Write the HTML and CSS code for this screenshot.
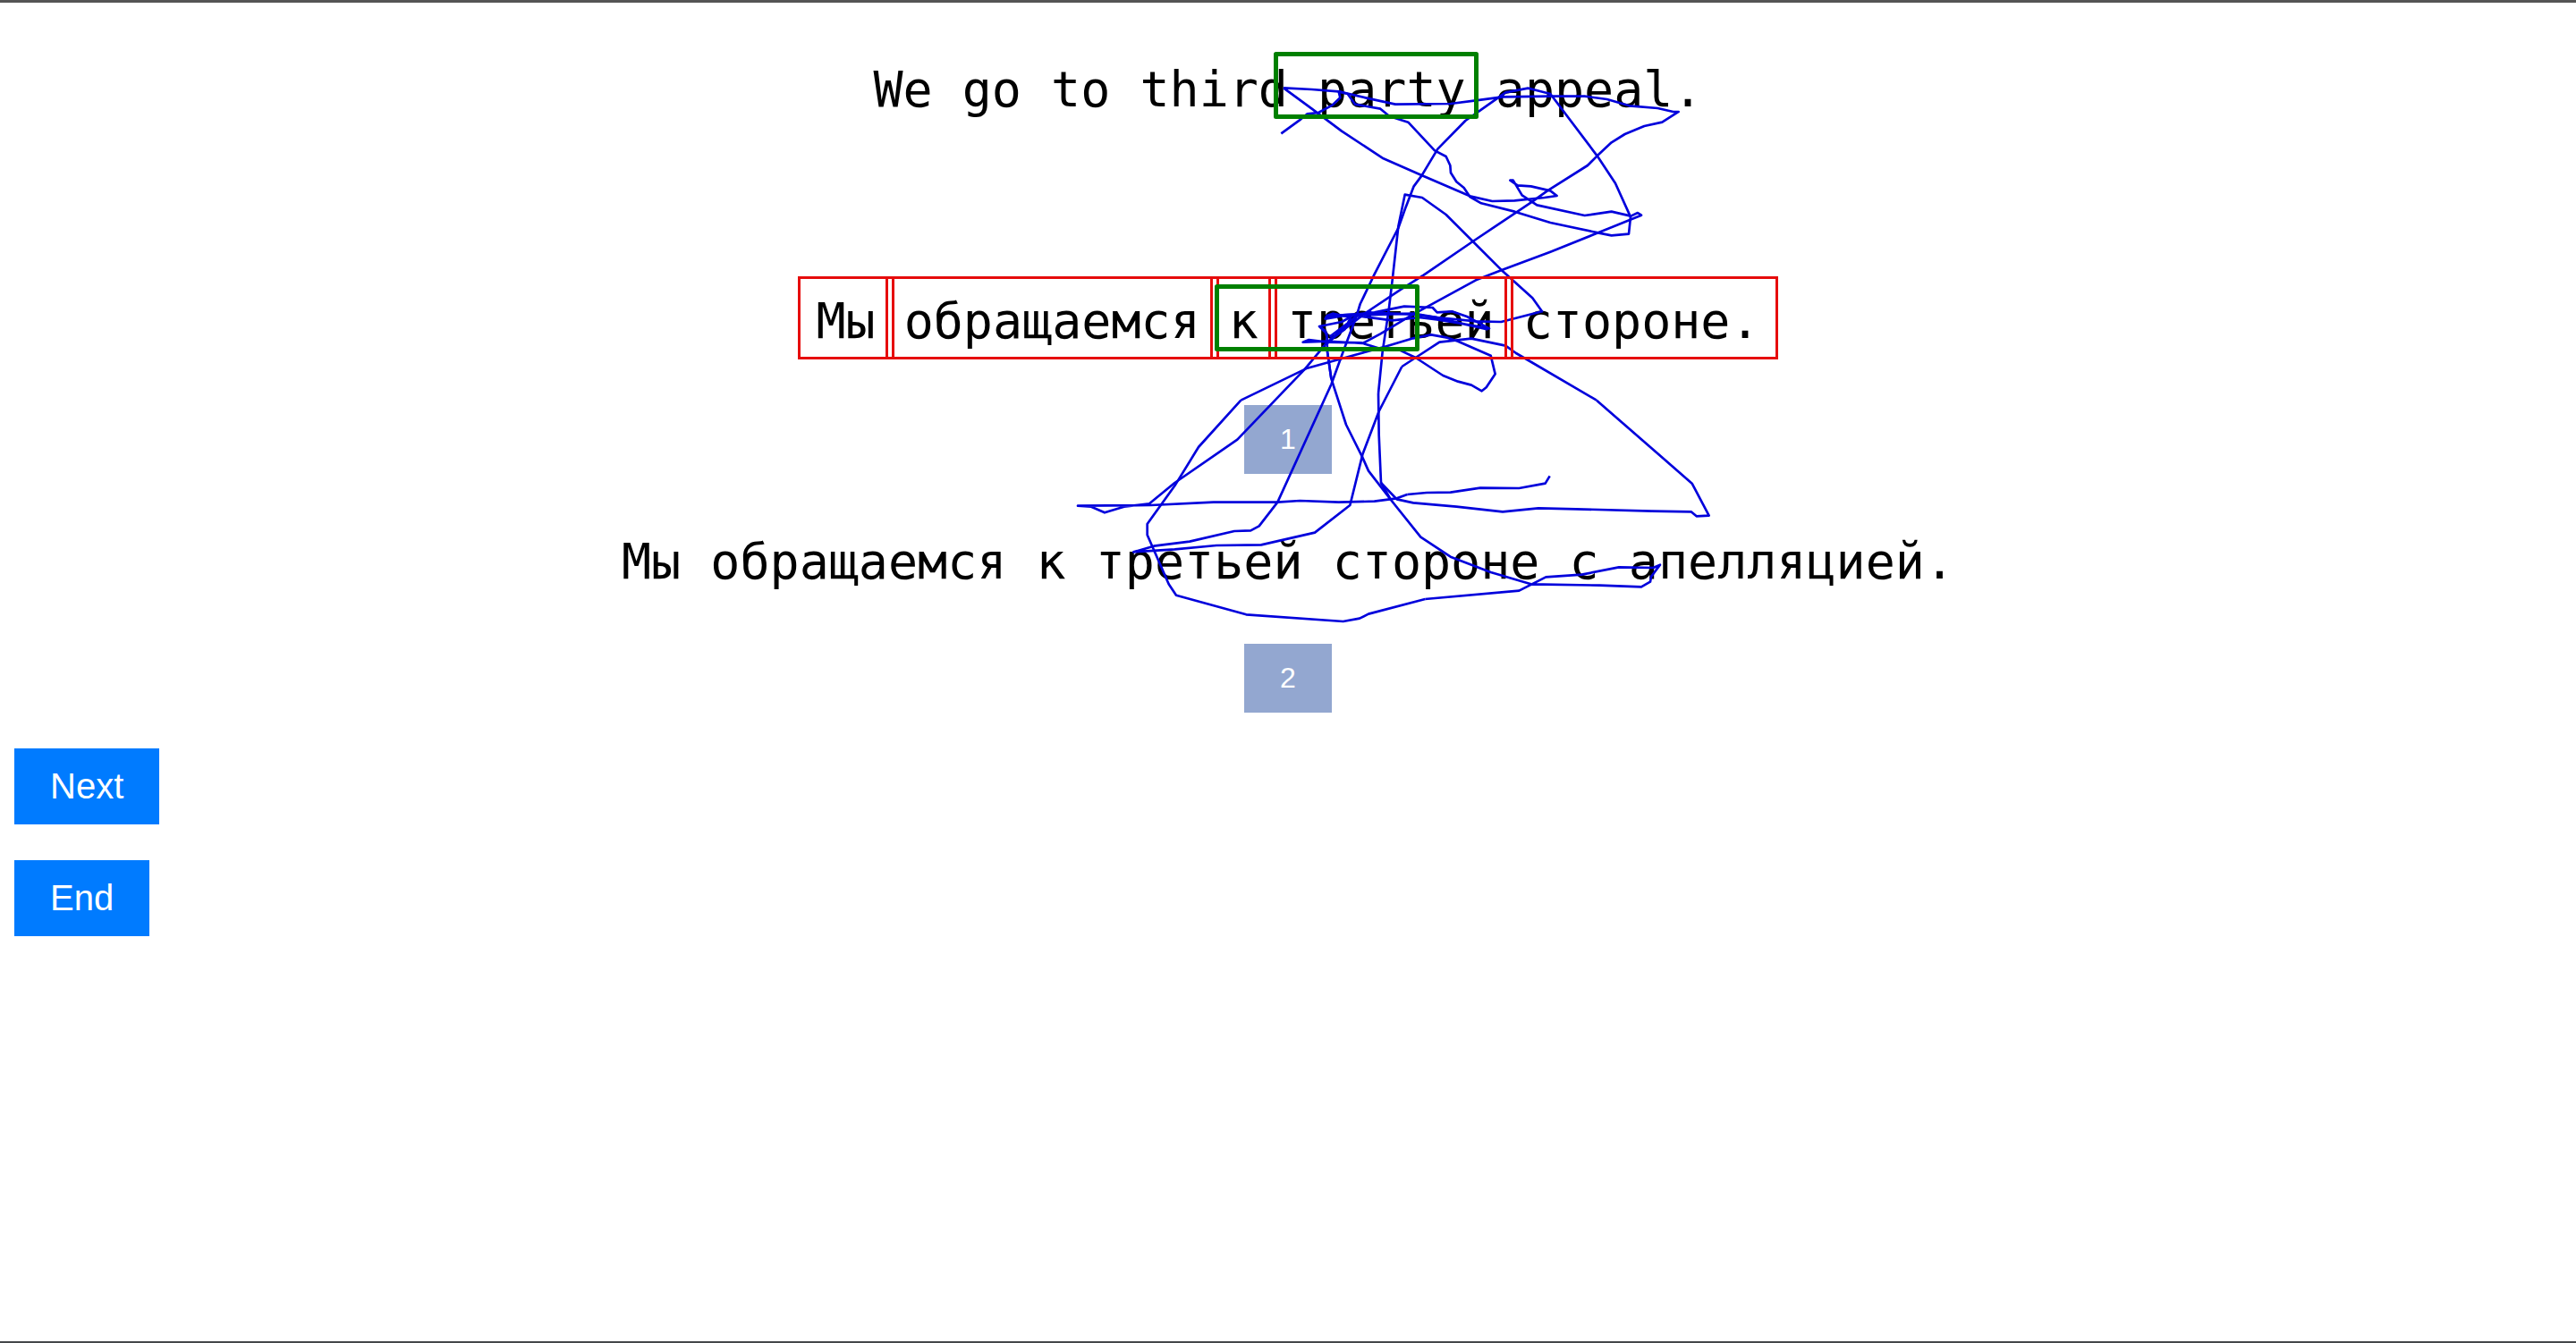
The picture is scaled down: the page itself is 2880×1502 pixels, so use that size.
FILE: index.html
```html
<!DOCTYPE html>
<html lang="en">
<head>
<meta charset="utf-8">
<title>Gaze reading</title>
<link rel="stylesheet" href="styles.css">
</head>
<body>
<main class="page">
  <p class="sentence">We go to third party appeal.</p>
  <section class="option option-words" lang="ru">
    <div class="words">
      <span class="word word-first">Мы</span>
      <span class="word">обращаемся</span>
      <span class="word">к</span>
      <span class="word">третьей</span>
      <span class="word word-last">стороне.</span>
    </div>
    <button class="choice" type="button">1</button>
  </section>
  <section class="option" lang="ru">
    <p class="sentence">Мы обращаемся к третьей стороне с апелляцией.</p>
    <button class="choice" type="button">2</button>
  </section>
  <nav class="actions">
    <button class="action" type="button">Next</button>
    <button class="action" type="button">End</button>
  </nav>
  <svg class="gaze" viewBox="640 0 1600 720" aria-hidden="true">
    <g class="trace">
      <g transform="translate(1400 40) scale(.33333)">
        <path d="M97 328L163 280L185 262L222 258L270 232L295 208L290 187L320 195L345 230L430 245L460 270L523 290L612 385L650 405L664 435L666 460L685 490L710 510L730 540L768 562L880 590L1000 627L1160 661L1205 670L1263 665L1269 608L1218 495L1157 403L1000 195L965 186L925 176L850 190L765 250L715 285L622 380L568 470L542 505L515 575L490 645L410 800L362 900L350 940L305 1060L265 1170"/>
        <path d="M502 1110L548 1080L628 1028L735 1016L850 1040L885 1065L1155 1223"/>
        <path d="M423 1200L437 1060L458 920L470 820L490 640L512 533L570 543L650 600L740 690L835 785L940 880L972 925L835 960L750 958L620 945L540 935L430 930L250 940"/>
        <path d="M105 175L200 180L290 187L380 208L480 230L665 228L750 217L840 205L1000 203L1115 203L1190 213L1265 235L1360 243L1412 255L1430 255L1375 290L1315 303L1250 330L1205 358L1157 403L1125 435L990 520L940 556L740 690L575 803L500 850L380 930L250 1030L175 1120"/>
        <path d="M105 175L200 245L300 320L440 412L568 468L730 538L805 555L880 553L980 543L1022 537L1000 520L935 505L890 502L865 485L875 485L905 535L955 568L1115 603L1205 590L1270 605L1293 594L1305 602L1160 661L1000 725L835 787L750 820L585 910L530 940L430 1000L370 1032L250 1025L170 1028L190 1020L250 1028L365 1030L430 1050L495 1055L548 1080L640 1140L690 1160L735 1172L770 1192L785 1180L815 1135L800 1073L690 1025L650 1012L600 1003L540 1015L445 1043L320 1078L185 1115L-38 1223"/>
        <path d="M265 1150L252 1060L250 1000L225 975L300 960L345 935L250 940L245 950L300 940L410 928L510 908L605 912L620 928L670 925L720 942L795 982L740 972L620 952L560 945L470 955L340 938L540 932L620 945L700 965L790 985"/>
        <path d="M230 978L245 990L255 1030L350 940M260 1010L320 965L350 940L400 925M250 940L270 932L330 945L310 985L260 1020"/>
      </g>
      <g transform="translate(1180 380) scale(.33333)">
        <path d="M925 150L745 545L683 625L655 640L600 642L450 677L330 692L262 712L290 706L262 712L400 703L540 690L690 688L870 647L988 555L1030 385L1085 240L1162 90"/>
        <path d="M835 100L610 335L400 480L315 550L230 560L165 580L120 560L75 557L320 555L530 545L745 545L820 540L950 545L1070 542L1145 532L1180 519"/>
        <path d="M622 203L480 360L400 490L308 618L308 655L330 705L380 820L405 857L640 922L965 945L1020 935L1050 920L1240 870"/>
        <path d="M1125 537L1050 440L1030 395L975 285L925 130L912 40"/>
      </g>
      <g transform="translate(1540 380) scale(.33333)">
        <path d="M735 203L1055 482L1112 590L1070 592L1052 577L920 575L665 568L540 565L420 577L265 560L120 547L65 535L12 480L5 320L3 180"/>
        <path d="M100 519L165 513L245 512L345 497L475 498L563 482L578 457"/>
        <path d="M160 870L475 842L565 796L685 788L810 763L925 765L948 755L918 795L915 812L885 829L745 824L515 820L380 780L245 728L145 662L45 537L12 480"/>
      </g>
    </g>
  </svg>
  <svg class="gaze gaze-boxes" viewBox="640 0 1600 720" aria-hidden="true">
    <rect x="1426.500" y="60.500" width="224" height="70"/>
    <rect x="1360.500" y="320.500" width="224" height="70"/>
  </svg>
</main>
</body>
</html>
```
FILE: styles.css
```css
* {
  box-sizing: border-box;
}

body {
  margin: 0;
  background: #fff;
}

.page {
  position: relative;
  display: flex;
  flex-direction: column;
  align-items: center;
  min-height: 100vh;
  padding-top: 60px;
  border-top: 3px solid #555;
  border-bottom: 2px solid #444749;
  overflow: hidden;
}

.sentence,
.words {
  margin: 0;
  color: #000;
  font-family: "DejaVu Sans Mono", monospace;
  font-size: 55px;
  line-height: 74px;
  white-space: nowrap;
}

.option {
  display: flex;
  flex-direction: column;
  align-items: center;
  gap: 55px;
  margin-top: 61px;
}

.option-words {
  gap: 51px;
  margin-top: 172px;
}

.words {
  position: relative;
  display: flex;
  gap: 4px;
  line-height: 80px;
}

.word {
  position: relative;
  padding: 10px 14px 3px;
}

/* Word frames stay above the gaze trace. */
.words::after,
.word::after {
  content: "";
  position: absolute;
  inset: 0;
  z-index: 2;
  border: 3px solid #e60c0c;
}

.word-first {
  padding-left: 20px;
}

.word-last {
  padding-right: 20px;
}

.choice,
.action {
  border: 0;
  color: #fff;
  font-family: "Liberation Sans", Arial, sans-serif;
}

.choice {
  padding: 20px 40px;
  background: #93a7d0;
  font-size: 32px;
  line-height: 37px;
}

.actions {
  display: flex;
  flex-direction: column;
  align-items: flex-start;
  align-self: flex-start;
  gap: 40px;
  margin: 40px 16px;
}

.action {
  padding: 20px 40px;
  background: #007bff;
  font-size: 40px;
  line-height: 45px;
}

.gaze {
  position: absolute;
  top: -3px;
  left: calc(50% - 800px);
  z-index: 1;
  width: 1600px;
  height: 720px;
  pointer-events: none;
}

.trace path {
  fill: none;
  stroke: #0000dc;
  stroke-width: 8;
  stroke-linejoin: round;
}

.gaze-boxes {
  z-index: 3;
}

.gaze-boxes rect {
  fill: none;
  stroke: #008000;
  stroke-width: 5;
  stroke-linejoin: round;
}
```
